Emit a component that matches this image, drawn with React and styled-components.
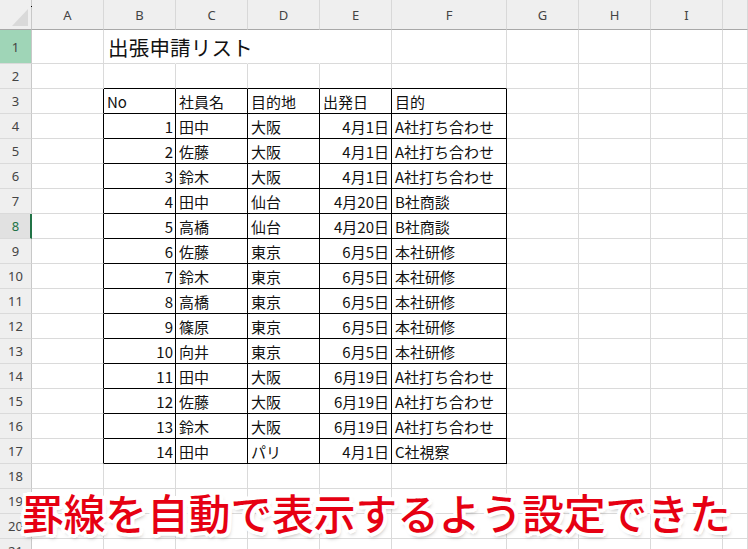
import React from "react";
import styled, { createGlobalStyle } from "styled-components";

const Global = createGlobalStyle`
  html, body { margin: 0; padding: 0; background: #fff; overflow: hidden; }
  body { font-family: "Noto Sans CJK JP", "Noto Sans", sans-serif; }
`;

const Page = styled.div`
  position: relative;
  width: 748px;
  height: 549px;
  overflow: hidden;
`;

const Grid = styled.div`
  display: grid;
  grid-template-columns: 32px repeat(5, 72px) 115px 72px 72px 72px 1fr;
  grid-template-rows: 30px 34px repeat(20, 25px);
`;

const Corner = styled.div`
  position: relative;
  background: #efefef;
  border-right: 1px solid #c8c8c8;
  border-bottom: 1px solid #a8a8a8;
  &::before {
    content: "";
    position: absolute;
    left: 12px;
    top: 9px;
    width: 16px;
    height: 17px;
    background: #d9d9d9;
    clip-path: polygon(100% 0, 100% 100%, 0 100%);
  }
  &::after {
    content: "";
    position: absolute;
    left: 31px;
    top: 6px;
    width: 1px;
    height: 1px;
    background: #000;
  }
`;

const ColHead = styled.div`
  background: #efefef;
  border-right: 1px solid #d8d8d8;
  border-bottom: 1px solid #a8a8a8;
  display: flex;
  align-items: center;
  justify-content: center;
  font-family: "Noto Sans", sans-serif;
  font-size: 13px;
  color: #444;
`;

const RowHead = styled.div`
  background: ${(p) => (p.$sel ? "#9fd5b7" : p.$act ? "#e1e1e1" : "#efefef")};
  border-right: ${(p) => (p.$act ? "2px solid #217346" : "1px solid #c8c8c8")};
  border-bottom: 1px solid #dadada;
  display: flex;
  align-items: center;
  justify-content: center;
  padding-left: ${(p) => (p.$act ? "1px" : "0")};
  font-family: "Noto Sans", sans-serif;
  font-size: 13px;
  color: ${(p) => (p.$act ? "#217346" : "#444")};
`;

const Cell = styled.div`
  border-right: 1px solid ${(p) => p.$right};
  border-bottom: 1px solid ${(p) => p.$bottom};
  display: flex;
  align-items: center;
  justify-content: ${(p) => (p.$num ? "flex-end" : "flex-start")};
  padding: 1px 2px 0 3px;
  font-size: 15px;
  color: #111;
  white-space: nowrap;
  min-width: 0;
  overflow: visible;
`;

const Title = styled.span`
  position: relative;
  z-index: 1;
  font-size: 20.5px;
  color: #111;
  padding-left: 1px;
  letter-spacing: 0.2px;
`;

const Caption = styled.div`
  position: absolute;
  left: 22px;
  top: 491px;
  font-size: 41.7px;
  line-height: 42px;
  font-weight: 500;
  color: #e60012;
  white-space: nowrap;
  text-shadow:
    3px 0 0 #fff, -3px 0 0 #fff, 0 3px 0 #fff, 0 -3px 0 #fff,
    2px 2px 0 #fff, -2px 2px 0 #fff, 2px -2px 0 #fff, -2px -2px 0 #fff,
    4px 1px 0 #fff, -4px 1px 0 #fff, 1px 4px 0 #fff, 1px -4px 0 #fff,
    3px 3px 0 #fff, -3px 3px 0 #fff, 3px -3px 0 #fff, -3px -3px 0 #fff,
    2px 4px 4px rgba(0, 0, 0, 0.35);
`;

const letters = ["A", "B", "C", "D", "E", "F", "G", "H", "I", ""];

const data = [
  [1, "田中", "大阪", "4月1日", "A社打ち合わせ"],
  [2, "佐藤", "大阪", "4月1日", "A社打ち合わせ"],
  [3, "鈴木", "大阪", "4月1日", "A社打ち合わせ"],
  [4, "田中", "仙台", "4月20日", "B社商談"],
  [5, "高橋", "仙台", "4月20日", "B社商談"],
  [6, "佐藤", "東京", "6月5日", "本社研修"],
  [7, "鈴木", "東京", "6月5日", "本社研修"],
  [8, "高橋", "東京", "6月5日", "本社研修"],
  [9, "篠原", "東京", "6月5日", "本社研修"],
  [10, "向井", "東京", "6月5日", "本社研修"],
  [11, "田中", "大阪", "6月19日", "A社打ち合わせ"],
  [12, "佐藤", "大阪", "6月19日", "A社打ち合わせ"],
  [13, "鈴木", "大阪", "6月19日", "A社打ち合わせ"],
  [14, "田中", "パリ", "4月1日", "C社視察"],
];

const GRID = "#dadada";
const BLACK = "#000";

function cellContent(r, c) {
  if (r === 1 && c === 2) return <Title>出張申請リスト</Title>;
  if (r === 3 && c >= 2 && c <= 6) return ["No", "社員名", "目的地", "出発日", "目的"][c - 2];
  if (r >= 4 && r <= 17 && c >= 2 && c <= 6) return data[r - 4][c - 2];
  return null;
}

export default function App() {
  const rows = [];
  for (let r = 1; r <= 21; r++) {
    rows.push(
      <RowHead key={`h${r}`} $sel={r === 1} $act={r === 8}>
        {r}
      </RowHead>
    );
    for (let c = 1; c <= 10; c++) {
      let right = GRID;
      let bottom = GRID;
      if (r >= 3 && r <= 17 && c >= 1 && c <= 6) right = BLACK;
      if (r >= 2 && r <= 17 && c >= 2 && c <= 6) bottom = BLACK;
      if (r === 1 && c >= 2 && c <= 4) right = "transparent";
      const num = r >= 4 && r <= 17 && (c === 2 || c === 5);
      rows.push(
        <Cell key={`${r}-${c}`} $right={right} $bottom={bottom} $num={num}>
          {cellContent(r, c)}
        </Cell>
      );
    }
  }
  return (
    <Page>
      <Global />
      <Grid>
        <Corner />
        {letters.map((l, i) => (
          <ColHead key={i}>{l}</ColHead>
        ))}
        {rows}
      </Grid>
      <Caption>罫線を自動で表示するよう設定できた</Caption>
    </Page>
  );
}
